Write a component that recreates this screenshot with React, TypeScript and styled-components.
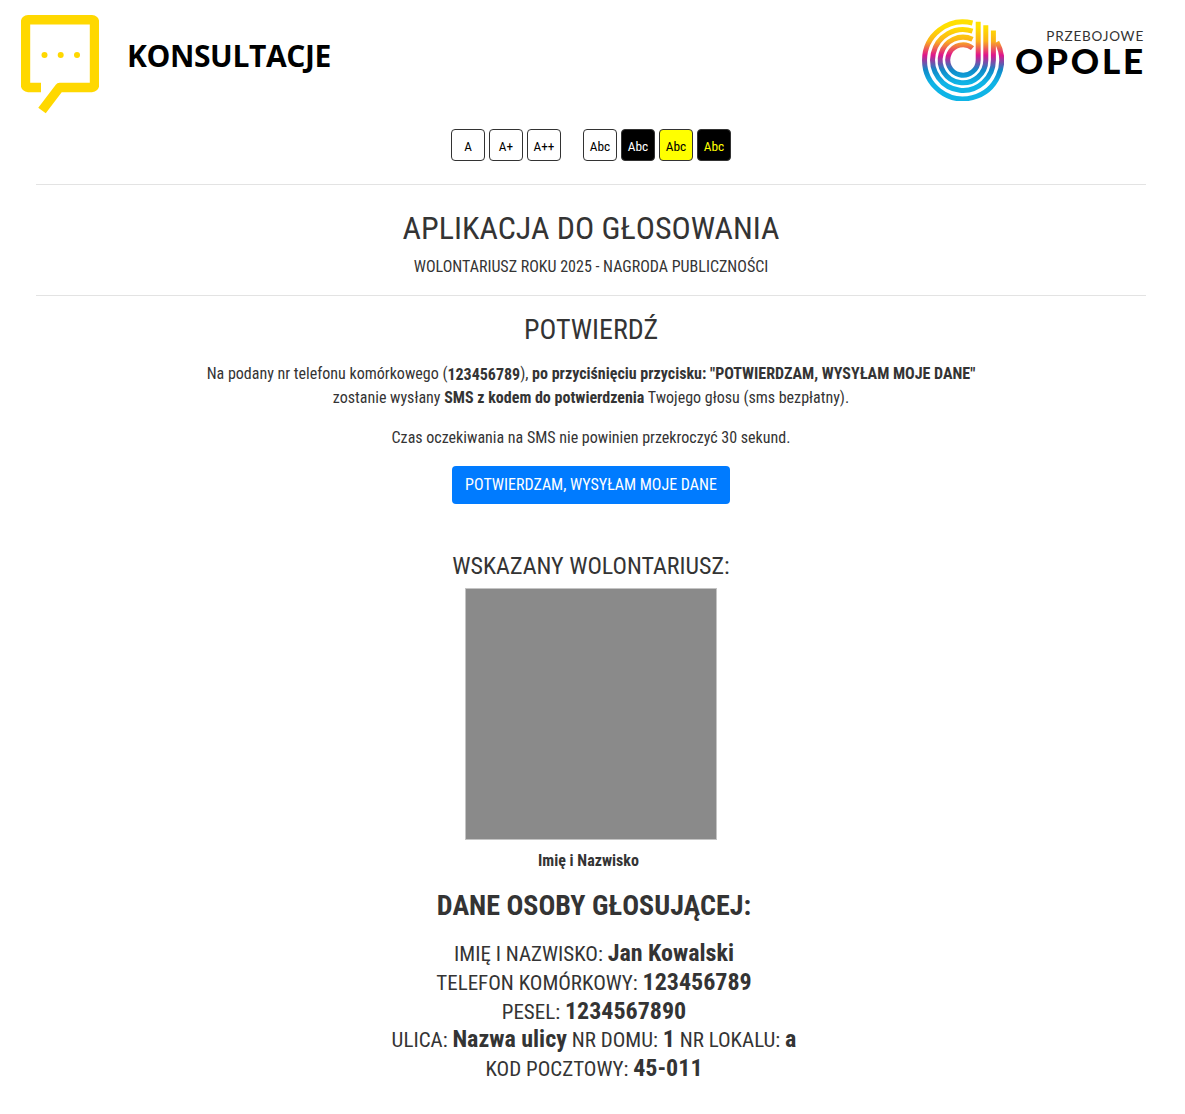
import React from 'react';
import styled, { createGlobalStyle } from 'styled-components';

const GlobalStyle = createGlobalStyle`
  html, body {
    margin: 0;
    padding: 0;
    background: #fff;
  }
  body {
    font-family: 'Roboto', 'Liberation Sans', sans-serif;
    font-stretch: 75%;
    font-size: 16px;
    line-height: 24px;
    color: #343434;
  }
`;

const Page = styled.div`
  width: 1182px;
  height: 1114px;
  overflow: hidden;
`;

const Header = styled.header`
  display: flex;
  justify-content: space-between;
  align-items: flex-start;
  box-sizing: border-box;
  height: 115px;
  padding: 15px 36px 0 21px;
`;

const Brand = styled.div`
  display: flex;
  align-items: flex-start;
  gap: 28px;
`;

const BrandName = styled.div`
  font-family: 'Open Sans', sans-serif;
  font-stretch: 100%;
  font-size: 30px;
  line-height: 40px;
  font-weight: 700;
  letter-spacing: -0.4px;
  color: #000;
  margin-top: 21px;
`;

const Partner = styled.div`
  display: flex;
  align-items: flex-start;
  gap: 11px;
  margin-right: 2px;
  margin-top: 4px;
`;

const PartnerText = styled.div`
  display: flex;
  flex-direction: column;
  align-items: flex-end;
  padding-top: 10px;
  font-family: 'Lato', sans-serif;
  font-stretch: 100%;
  color: #000;
`;

const PartnerTop = styled.div`
  font-size: 13.5px;
  line-height: 14px;
  letter-spacing: 0.8px;
  color: #333;
`;

const PartnerMain = styled.div`
  font-size: 35px;
  line-height: 26px;
  font-weight: 900;
  letter-spacing: 2.8px;
  margin: 4px -2px 0 0;
`;

const Toolbar = styled.div`
  display: flex;
  justify-content: center;
  gap: 4px;
  height: 32px;
  margin: 14px 0 23px;
`;

const ToolButton = styled.button<{ $bg?: string; $fg?: string; $gapLeft?: boolean }>`
  width: 34px;
  height: 32px;
  padding: 2px 0 0;
  margin-left: ${({ $gapLeft }) => ($gapLeft ? '18px' : '0')};
  border: 1px solid #333;
  border-radius: 4px;
  background: ${({ $bg }) => $bg || '#fff'};
  color: ${({ $fg }) => $fg || '#000'};
  font-family: inherit;
  font-stretch: 75%;
  font-size: 13.33px;
  font-weight: 400;
`;

const Main = styled.main`
  width: 1110px;
  margin: 0 auto;
  text-align: center;
`;

const Rule = styled.div`
  border-top: 1px solid #e3e3e3;
`;

const Heading = styled.h1`
  margin: 24px 0 0;
  font-size: 32px;
  line-height: 38px;
  font-weight: 400;
`;

const SubHeading = styled.div`
  margin: 8px 0 16px;
  font-size: 16px;
  line-height: 24px;
`;

const Confirm = styled.h2`
  margin: 16px 0 0;
  font-size: 28px;
  line-height: 36px;
  font-weight: 400;
`;

const Paragraph = styled.p`
  margin: 14px 0 0;
  line-height: 24px;

  & + & {
    margin-top: 16px;
  }
`;

const PhoneNumber = styled.strong`
  display: inline-block;
  line-height: 1;
  vertical-align: -1px;
  font-weight: 700;
`;

const PrimaryButton = styled.button`
  display: block;
  width: 278px;
  height: 38px;
  margin: 16px auto 0;
  padding: 0 0 2px;
  border: 0;
  border-radius: 4px;
  background: #007bff;
  color: #fff;
  font-family: inherit;
  font-stretch: 75%;
  font-size: 16px;
  font-weight: 400;
`;

const SectionTitle = styled.h3`
  margin: 46px 0 0;
  font-size: 24px;
  line-height: 32px;
  font-weight: 400;
`;

const Photo = styled.div`
  width: 252px;
  height: 252px;
  margin: 6px auto 0;
  box-sizing: border-box;
  background: #8a8a8a;
  border: 1px solid #c4c4c4;
`;

const Caption = styled.div`
  margin-top: 9px;
  padding-right: 5px;
  font-weight: 700;
`;

const VoterTitle = styled.h3`
  margin: 15px 0 0;
  padding-left: 6px;
  font-size: 28px;
  line-height: 36px;
  font-weight: 700;
`;

const VoterData = styled.div`
  margin-top: 16px;
  padding-left: 6px;
  font-size: 21px;
  line-height: 28.8px;
`;

const Value = styled.strong`
  font-size: 24px;
  line-height: 1;
  font-weight: 700;
`;

const SpeechIcon = () => (
  <svg width="78" height="99" viewBox="0 0 78 99" aria-hidden="true">
    <path
      d="M20 72.5 H7 a2.5 2.5 0 0 1 -2.5 -2.5 V7.2 a2.5 2.5 0 0 1 2.5 -2.5 H71 a2.5 2.5 0 0 1 2.5 2.5 V70 a2.5 2.5 0 0 1 -2.5 2.5 H38.5 L21 95.5"
      fill="none"
      stroke="#ffd800"
      strokeWidth="9.4"
      strokeLinejoin="round"
    />
    <circle cx="23.5" cy="40" r="3" fill="#ffd800" />
    <circle cx="39.7" cy="40" r="3" fill="#ffd800" />
    <circle cx="56" cy="40" r="3" fill="#ffd800" />
  </svg>
);

const RingsLogo = () => (
  <svg width="82" height="82" viewBox="0 0 82 82" aria-hidden="true">
    <defs>
      <linearGradient id="rings" x1="0" y1="0" x2="0" y2="82" gradientUnits="userSpaceOnUse">
        <stop offset="0.1" stopColor="#ffe000" />
        <stop offset="0.27" stopColor="#fbb21a" />
        <stop offset="0.44" stopColor="#e0148c" />
        <stop offset="0.62" stopColor="#1089c8" />
        <stop offset="0.78" stopColor="#0fb4e6" />
      </linearGradient>
    </defs>
    <g fill="none" stroke="url(#rings)" strokeWidth="5">
      <path d="M50.5 4 A38.5 38.5 0 1 0 74.9 23" />
      <path d="M50.5 12.1 A30.4 30.4 0 1 0 71.4 41 V11.5" />
      <path d="M50.5 20.3 A22.8 22.8 0 1 0 63.8 41 V6.2" />
      <path d="M50.5 29.1 A15.2 15.2 0 1 0 56.2 41 V2.8" />
    </g>
  </svg>
);

export default function App() {
  return (
    <Page>
      <GlobalStyle />
      <Header>
        <Brand>
          <SpeechIcon />
          <BrandName>KONSULTACJE</BrandName>
        </Brand>
        <Partner>
          <RingsLogo />
          <PartnerText>
            <PartnerTop>PRZEBOJOWE</PartnerTop>
            <PartnerMain>OPOLE</PartnerMain>
          </PartnerText>
        </Partner>
      </Header>
      <Toolbar>
        <ToolButton>A</ToolButton>
        <ToolButton>A+</ToolButton>
        <ToolButton>A++</ToolButton>
        <ToolButton $gapLeft>Abc</ToolButton>
        <ToolButton $bg="#000" $fg="#fff">Abc</ToolButton>
        <ToolButton $bg="#ff0" $fg="#000">Abc</ToolButton>
        <ToolButton $bg="#000" $fg="#ff0">Abc</ToolButton>
      </Toolbar>
      <Main>
        <Rule />
        <Heading>APLIKACJA DO GŁOSOWANIA</Heading>
        <SubHeading>WOLONTARIUSZ ROKU 2025 - NAGRODA PUBLICZNOŚCI</SubHeading>
        <Rule />
        <Confirm>POTWIERDŹ</Confirm>
        <Paragraph>
          Na podany nr telefonu komórkowego (<PhoneNumber>123456789</PhoneNumber>),{' '}
          <strong>po przyciśnięciu przycisku: "POTWIERDZAM, WYSYŁAM MOJE DANE"</strong>
          <br />
          zostanie wysłany <strong>SMS z kodem do potwierdzenia</strong> Twojego głosu (sms bezpłatny).
        </Paragraph>
        <Paragraph>Czas oczekiwania na SMS nie powinien przekroczyć 30 sekund.</Paragraph>
        <PrimaryButton>POTWIERDZAM, WYSYŁAM MOJE DANE</PrimaryButton>
        <SectionTitle>WSKAZANY WOLONTARIUSZ:</SectionTitle>
        <Photo />
        <Caption>Imię i Nazwisko</Caption>
        <VoterTitle>DANE OSOBY GŁOSUJĄCEJ:</VoterTitle>
        <VoterData>
          IMIĘ I NAZWISKO: <Value>Jan Kowalski</Value>
          <br />
          TELEFON KOMÓRKOWY: <Value>123456789</Value>
          <br />
          PESEL: <Value>1234567890</Value>
          <br />
          ULICA: <Value>Nazwa ulicy</Value> NR DOMU: <Value>1</Value> NR LOKALU: <Value>a</Value>
          <br />
          KOD POCZTOWY: <Value>45-011</Value>
        </VoterData>
      </Main>
    </Page>
  );
}
